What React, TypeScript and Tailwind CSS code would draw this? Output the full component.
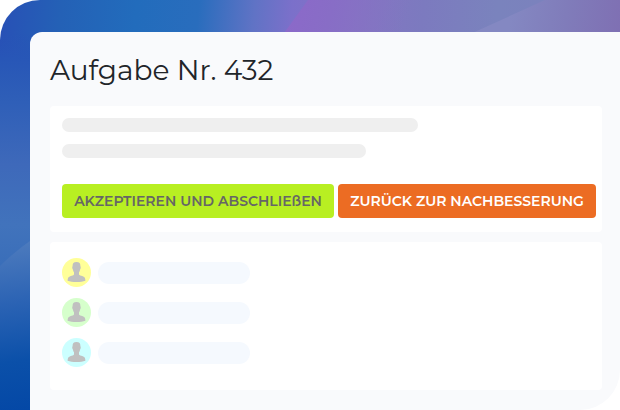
const people = [
  { id: 1, avatar: "bg-[#ffff99]" },
  { id: 2, avatar: "bg-[#d6ffcc]" },
  { id: 3, avatar: "bg-[#ccffff]" },
];

function Backdrop() {
  return (
    <svg
      className="absolute inset-0 h-full w-full"
      viewBox="0 0 620 410"
      preserveAspectRatio="none"
      aria-hidden="true"
    >
      <defs>
        <linearGradient id="top" gradientUnits="userSpaceOnUse" x1="0" y1="0" x2="617" y2="62">
          <stop offset="0" stopColor="#2850b6" />
          <stop offset="0.1" stopColor="#2461b6" />
          <stop offset="0.22" stopColor="#226cbc" />
          <stop offset="0.32" stopColor="#296dbd" />
          <stop offset="0.41" stopColor="#6073c5" />
          <stop offset="0.47" stopColor="#7b70ca" />
          <stop offset="0.56" stopColor="#8574c3" />
          <stop offset="0.68" stopColor="#7c7abf" />
          <stop offset="0.8" stopColor="#7a83bd" />
          <stop offset="1" stopColor="#7d80bd" />
        </linearGradient>
        <linearGradient id="beam" gradientUnits="userSpaceOnUse" x1="290" y1="10" x2="400" y2="40">
          <stop offset="0" stopColor="#8b69c9" />
          <stop offset="0.35" stopColor="#886dc6" />
          <stop offset="1" stopColor="#8574c3" stopOpacity="0" />
        </linearGradient>
        <linearGradient id="ridge" gradientUnits="userSpaceOnUse" x1="510" y1="16" x2="620" y2="30">
          <stop offset="0" stopColor="#8488c2" />
          <stop offset="0.5" stopColor="#807cba" />
          <stop offset="1" stopColor="#7f70b3" />
        </linearGradient>
        <linearGradient id="side" gradientUnits="userSpaceOnUse" x1="0" y1="0" x2="0" y2="410">
          <stop offset="0.08" stopColor="#2852b7" stopOpacity="0" />
          <stop offset="0.15" stopColor="#2857b7" />
          <stop offset="0.25" stopColor="#2f5fb8" />
          <stop offset="0.4" stopColor="#3e69ba" />
          <stop offset="0.55" stopColor="#4173bc" />
          <stop offset="0.75" stopColor="#3269b6" />
        </linearGradient>
        <linearGradient id="wave" gradientUnits="userSpaceOnUse" x1="8" y1="245" x2="28" y2="410">
          <stop offset="0" stopColor="#4c7abd" />
          <stop offset="0.35" stopColor="#2b63b4" />
          <stop offset="0.7" stopColor="#0b50a9" />
          <stop offset="1" stopColor="#0448a6" />
        </linearGradient>
      </defs>
      <path d="M0 0H620V46H46V410H0Z" fill="url(#top)" />
      <path d="M308 0H420V40H279Z" fill="url(#beam)" />
      <path d="M545 0H620V40H457Z" fill="url(#ridge)" />
      <path d="M0 32H34V410H0Z" fill="url(#side)" />
      <path d="M0 266Q14 252 34 238V410H0Z" fill="url(#wave)" />
    </svg>
  );
}

function PersonIcon() {
  return (
    <svg className="h-[21px] w-[19px]" viewBox="0 0 19 21" fill="#c0c0c0" aria-hidden="true">
      <path d="M9.500 0C6.600 0 5.400 1.500 5.600 4.300C5 4.700 5.200 6.900 5.900 7.400C6.100 8.700 6.500 9.500 7 10.200V12.500C6.700 13.400 5.200 13.600 3.200 14.200C1.100 14.900.6 16.300.6 18.800C2.800 19.600 6 20 9.500 20S16.200 19.600 18.400 18.800C18.400 16.300 17.900 14.900 15.800 14.200C13.800 13.600 12.300 13.400 12 12.500V10.200C12.500 9.500 12.900 8.700 13.100 7.400C13.800 6.900 14 4.700 13.400 4.300C13.600 1.500 12.400 0 9.500 0Z" />
    </svg>
  );
}

export default function App() {
  return (
    <div className="min-h-screen bg-white font-[Montserrat,Inter,sans-serif]">
      <div className="relative flex min-h-screen flex-col overflow-hidden rounded-tl-[40px] pt-8 pl-[30px]">
        <Backdrop />
        <main className="relative flex-1 rounded-tl-xl rounded-br-[40px] bg-[#f9fafc] pt-5 pr-[18px] pb-5 pl-5">
          <h1 className="mb-[18px] text-[28px] leading-9 font-normal text-[#212529]">
            Aufgabe Nr. 432
          </h1>

          <section className="mb-2.5 rounded bg-white pt-3 pr-1.5 pb-3.5 pl-3">
            <div className="h-3.5 w-2/3 rounded-full bg-[#efefef]" />
            <div className="mt-3 h-3.5 w-[57%] rounded-full bg-[#efefef]" />
            <div className="mt-[26px] flex gap-1">
              <button
                type="button"
                className="h-[34px] w-[272px] rounded bg-[#b8ef22] text-sm font-semibold whitespace-nowrap text-[#666666]"
              >
                AKZEPTIEREN UND ABSCHLIEßEN
              </button>
              <button
                type="button"
                className="h-[34px] w-[258px] rounded bg-[#ec6c23] text-sm font-semibold whitespace-nowrap text-white"
              >
                ZURÜCK ZUR NACHBESSERUNG
              </button>
            </div>
          </section>

          <section className="rounded bg-white px-3 pt-4 pb-[23px]">
            <ul className="flex flex-col gap-[11px]">
              {people.map((person) => (
                <li key={person.id} className="flex items-center gap-[7px]">
                  <span
                    className={`flex h-[29px] w-[29px] items-center justify-center rounded-full ${person.avatar}`}
                  >
                    <PersonIcon />
                  </span>
                  <span className="h-[22px] w-[152px] rounded-full bg-[#f5f9fe]" />
                </li>
              ))}
            </ul>
          </section>
        </main>
      </div>
    </div>
  );
}
